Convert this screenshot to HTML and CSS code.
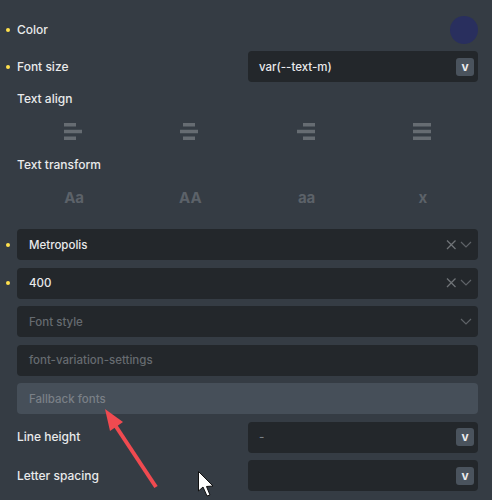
FILE: index.html
```html
<!DOCTYPE html>
<html lang="en">
<head>
<meta charset="utf-8">
<title>Typography controls</title>
<link rel="stylesheet" href="styles.css">
</head>
<body>
<main class="panel">
  <div class="row row-color">
    <label class="label has-dot">Color</label>
    <span class="swatch"></span>
  </div>
  <div class="row row-size">
    <label class="label has-dot">Font size</label>
    <div class="field half"><span class="value">var(--text-m)</span><span class="v">v</span></div>
  </div>
  <div class="label heading heading-align">Text align</div>
  <div class="options options-align">
    <span class="opt"><svg width="18" height="18" viewBox="0 0 18 18"><path d="M0 0h12v3.500H0zM0 6.750h18v3.500H0zM0 13.500h12v3.500H0z" class="bars"/></svg></span>
    <span class="opt"><svg width="18" height="18" viewBox="0 0 18 18"><path d="M3 0h12v3.500H3zM0 6.750h18v3.500H0zM3 13.500h12v3.500H3z" class="bars"/></svg></span>
    <span class="opt"><svg width="18" height="18" viewBox="0 0 18 18"><path d="M6 0h12v3.500H6zM0 6.750h18v3.500H0zM6 13.500h12v3.500H6z" class="bars"/></svg></span>
    <span class="opt"><svg width="18" height="18" viewBox="0 0 18 18"><path d="M0 0h18v3.500H0zM0 6.750h18v3.500H0zM0 13.500h18v3.500H0z" class="bars"/></svg></span>
  </div>
  <div class="label heading heading-transform">Text transform</div>
  <div class="options options-transform">
    <span class="opt case">Aa</span>
    <span class="opt case">AA</span>
    <span class="opt case">aa</span>
    <span class="opt case">x</span>
  </div>
  <div class="stack">
    <div class="dot-row has-dot">
      <div class="field"><span class="value">Metropolis</span>
        <svg class="ico" width="28" height="14" viewBox="0 0 28 14"><path class="x" d="M1 2.500l8.500 8.500M9.500 2.500L1 11"/><path class="chev" d="M15 4l5 5 5-5"/></svg>
      </div>
    </div>
    <div class="dot-row has-dot">
      <div class="field"><span class="value">400</span>
        <svg class="ico" width="28" height="14" viewBox="0 0 28 14"><path class="x" d="M1 2.500l8.500 8.500M9.500 2.500L1 11"/><path class="chev" d="M15 4l5 5 5-5"/></svg>
      </div>
    </div>
    <div class="dot-row">
      <div class="field"><span class="value muted">Font style</span>
        <svg class="ico" width="28" height="14" viewBox="0 0 28 14"><path class="chev" d="M15 4l5 5 5-5"/></svg>
      </div>
    </div>
    <div class="dot-row">
      <div class="field"><span class="value muted">font-variation-settings</span></div>
    </div>
    <div class="dot-row">
      <div class="field active"><span class="value muted">Fallback fonts</span></div>
    </div>
    <div class="row">
      <label class="label">Line height</label>
      <div class="field half"><span class="value dash">-</span><span class="v">v</span></div>
    </div>
    <div class="row">
      <label class="label">Letter spacing</label>
      <div class="field half"><span class="value"></span><span class="v">v</span></div>
    </div>
  </div>
</main>
<svg class="overlay" width="492" height="500" viewBox="0 0 492 500" aria-hidden="true">
  <path d="M156 487L115 425" stroke="#f04a50" stroke-width="4" fill="none"/>
  <path d="M105 409L123 422L110 431Z" fill="#f04a50"/>
  <path d="M198.500 471.500V491L203 487L207 496L210 495L206.500 486.500L213 486Z" fill="#fff" stroke="#111" stroke-width="1"/>
</svg>
</body>
</html>
```
FILE: styles.css
```css
* { box-sizing: border-box; }
html, body { margin: 0; padding: 0; }
body {
  width: 492px;
  height: 500px;
  overflow: hidden;
  background: #353c44;
  font-family: Inter, "Liberation Sans", sans-serif;
  font-size: 12px;
  color: #e9eaeb;
  position: relative;
}
.panel { padding: 14px 14px 0 17px; display: flex; flex-direction: column; }
.row {
  display: grid;
  grid-template-columns: 231px 230px;
  align-items: center;
  height: 31px;
}
.row-color { height: 32px; }
.row-color .swatch { justify-self: end; }
.row-size { margin-top: 5px; }
.label { font-weight: 500; font-size: 12px; line-height: 16px; position: relative; display: block; }
.has-dot { position: relative; }
.has-dot::before {
  content: "";
  position: absolute;
  left: -11px;
  top: 50%;
  width: 4px;
  height: 4px;
  margin-top: -2px;
  border-radius: 50%;
  background: #ffe14d;
}
.swatch { width: 28px; height: 28px; border-radius: 50%; background: #292f5e; }
.heading-align { margin-top: 9px; }
.heading-transform { margin-top: 16px; }
.options { display: grid; grid-template-columns: repeat(4, 1fr); margin: 0 -2px; height: 18px; align-items: center; justify-items: center; }
.options-align { margin-top: 16px; }
.options-transform { margin: 16px -3px 0 -1px; }
.opt { display: flex; }
.opt svg { display: block; }
.bars { fill: #666c72; }
.case { font-weight: 700; font-size: 15px; color: #5c6269; line-height: 18px; }
.stack { display: flex; flex-direction: column; gap: 7.500px; margin-top: 22px; }
.dot-row { position: relative; }
.field {
  height: 31px;
  background: #23272b;
  border-radius: 4px;
  padding: 0 4px 0 12px;
  display: flex;
  align-items: center;
  justify-content: space-between;
}
.field.half { padding-left: 11px; }
.field.active { background: #464f59; }
.value { font-size: 11.500px; font-weight: 500; color: #e9eaeb; }
.muted { color: #666b70; }
.active .muted { color: #7a8087; }
.dash { color: #7a8087; }
.v {
  width: 18px;
  height: 18px;
  border-radius: 3px;
  background: #4a535d;
  color: #e9eaeb;
  font-size: 12px;
  font-weight: 700;
  line-height: 17px;
  text-align: center;
}
.ico { flex: none; }
.x { stroke: #6f7377; stroke-width: 1.300; fill: none; }
.chev { stroke: #5f6368; stroke-width: 1.200; fill: none; }
.overlay { position: absolute; left: 0; top: 0; pointer-events: none; }
```
